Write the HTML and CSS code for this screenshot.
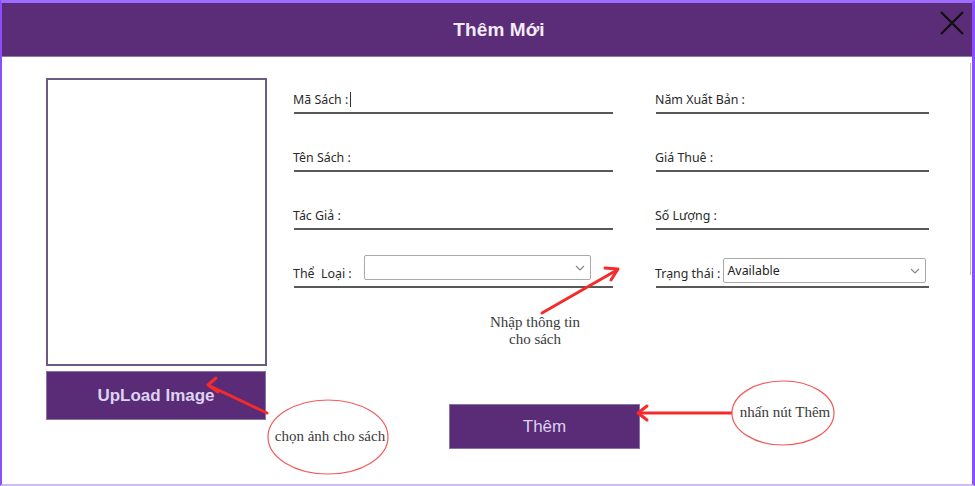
FILE: index.html
```html
<!DOCTYPE html>
<html lang="vi">
<head>
<meta charset="utf-8">
<title>Thêm Mới</title>
<link rel="stylesheet" href="styles.css">
</head>
<body>
<div class="window">
  <header class="titlebar">
    <span class="spacer"></span>
    <h1 class="title">Thêm Mới</h1>
    <button class="close" aria-label="Đóng">
      <svg width="26" height="24" viewBox="0 0 26 24"><path d="M2 1 L24 23 M24 1 L2 23" stroke="#111" stroke-width="2.4" fill="none"/></svg>
    </button>
  </header>
  <main class="content">
    <section class="left">
      <div class="imagebox"></div>
      <button class="btn upload">UpLoad Image</button>
    </section>
    <section class="right">
      <form class="form">
        <div class="field"><span class="label">Mã Sách :</span><span class="caret"></span></div>
        <div class="field"><span class="label">Năm Xuất Bản :</span></div>
        <div class="field"><span class="label">Tên Sách :</span></div>
        <div class="field"><span class="label">Giá Thuê :</span></div>
        <div class="field"><span class="label">Tác Giả :</span></div>
        <div class="field"><span class="label">Số Lượng :</span></div>
        <div class="field combo-field"><span class="label">Thể&nbsp; Loại :</span>
          <div class="combo theloai"><span class="combo-text"></span>
            <svg class="chev" width="10" height="6" viewBox="0 0 10 6"><path d="M1 1 L5 5 L9 1" stroke="#888" stroke-width="1.2" fill="none"/></svg>
          </div>
        </div>
        <div class="field combo-field"><span class="label">Trạng thái :</span>
          <div class="combo trangthai"><span class="combo-text">Available</span>
            <svg class="chev" width="10" height="6" viewBox="0 0 10 6"><path d="M1 1 L5 5 L9 1" stroke="#888" stroke-width="1.2" fill="none"/></svg>
          </div>
        </div>
      </form>
      <button class="btn add">Thêm</button>
    </section>
  </main>
  <div class="scrollbar"></div>

  <svg class="notes" width="975" height="486" viewBox="0 0 975 486">
    <g stroke="#f52b2b" stroke-width="3" fill="none" stroke-linecap="round" stroke-linejoin="round">
      <path d="M542 313 L617 270"/>
      <path d="M605 268 L618 269 L611 280"/>
      <path d="M267 413 L210 386"/>
      <path d="M216 378 L208 385 L218 392"/>
      <path d="M732 413 L639 413"/>
      <path d="M647 406 L638 413 L647 420"/>
    </g>
    <ellipse cx="328" cy="437" rx="60" ry="37" stroke="#f25a5a" stroke-width="1.2" fill="#fff"/>
    <ellipse cx="783" cy="413" rx="51" ry="32" stroke="#f25a5a" stroke-width="1.2" fill="#fff"/>
  </svg>
  <div class="note note-info">Nhập thông tin<br>cho sách</div>
  <div class="note note-img">chọn ảnh cho sách</div>
  <div class="note note-add">nhấn nút Thêm</div>
</div>
</body>
</html>
```

FILE: styles.css
```css
* { box-sizing: border-box; }
html, body { margin: 0; padding: 0; background: #fff; }
body { font-family: "Liberation Sans", Arial, sans-serif; }

.window {
  position: relative;
  width: 975px;
  height: 486px;
  border-left: 2px solid #8a4dff;
  border-top: 3px solid #9d6cff;
  border-right: 3px solid #8a4dff;
  border-bottom: 2px solid #cbbcf6;
  background: #fff;
  overflow: hidden;
}

.titlebar {
  height: 54px;
  background: #5b2d78;
  border-bottom: 1px solid #8e7aa6;
  display: grid;
  grid-template-columns: 1fr auto 1fr;
  align-items: center;
  padding-left: 24px;
}
.title {
  margin: 0;
  font-size: 19px;
  font-weight: bold;
  color: #f1ebf7;
  letter-spacing: 0.1px;
}
.close {
  justify-self: end;
  margin-right: 7px;
  margin-top: -13px;
  background: none;
  border: 0;
  padding: 0;
  display: flex;
}

.content {
  display: flex;
  gap: 26px;
  padding: 21px 0 0 44px;
}
.left {
  width: 221px;
  display: flex;
  flex-direction: column;
  gap: 5px;
}
.imagebox {
  height: 288px;
  border: 2px solid #6c5a86;
}
.btn {
  background: #5a2b77;
  border: 1px solid #8a74a4;
  font-family: "Liberation Sans", Arial, sans-serif;
  color: #dcd3ef;
  cursor: pointer;
}
.upload {
  height: 49px;
  width: 220px;
  font-size: 17px;
  font-weight: bold;
}

.right {
  display: flex;
  flex-direction: column;
}
.form {
  margin: 4px 0 0 1px;
  display: grid;
  grid-template-columns: 319px 273px;
  column-gap: 43px;
  row-gap: 26px;
}
.field {
  height: 32px;
  border-bottom: 2px solid #585858;
  display: flex;
  align-items: flex-end;
  padding-bottom: 4px;
}
.label {
  font-family: "Noto Sans", "Liberation Sans", sans-serif;
  font-size: 12.4px;
  color: #2a2a2a;
  white-space: nowrap;
  margin-left: -1px;
}
.caret {
  width: 1px;
  height: 15px;
  background: #333;
  margin-left: 2px;
  margin-bottom: 1px;
}
.combo-field {
  padding-bottom: 4px;
}
.combo {
  height: 25px;
  border: 1px solid #a9a9a9;
  border-radius: 2px;
  background: #fff;
  display: flex;
  align-items: center;
  justify-content: space-between;
  padding: 0 5px 0 3px;
}
.theloai { width: 227px; margin-left: 12px; margin-bottom: 2px; }
.trangthai { width: 203px; margin-left: 3px; margin-bottom: -1px; }
.combo-text {
  font-family: "Noto Sans", "Liberation Sans", sans-serif;
  font-size: 12.4px;
  color: #222;
}

.add {
  width: 191px;
  height: 45px;
  margin: 116px 0 0 156px;
  font-size: 17px;
}

.scrollbar {
  position: absolute;
  right: 1px;
  top: 60px;
  width: 1px;
  height: 212px;
  background: #b9b9b9;
}

.notes {
  position: absolute;
  left: -2px;
  top: -3px;
}
.note {
  position: absolute;
  font-family: "Liberation Serif", "Times New Roman", serif;
  font-size: 15px;
  line-height: 17px;
  color: #3a3a3a;
  text-align: center;
  white-space: nowrap;
}
.note-info { left: 481px; top: 311px; width: 104px; }
.note-img { left: 264px; top: 425px; width: 128px; }
.note-add { left: 729px; top: 401px; width: 108px; }
```
